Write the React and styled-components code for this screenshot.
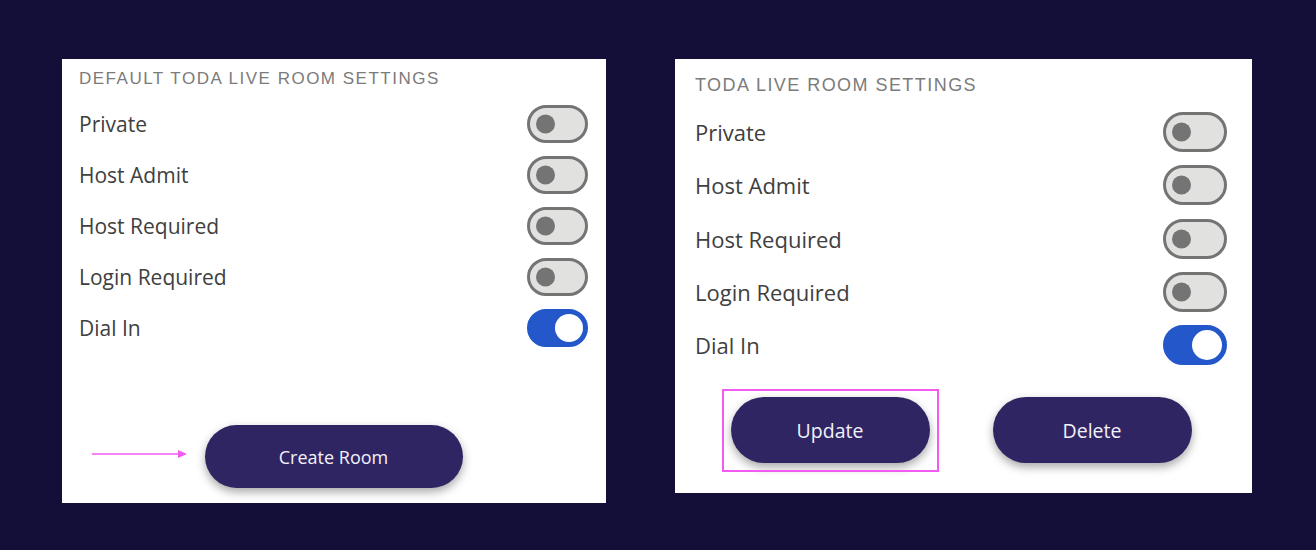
import styled, { createGlobalStyle } from "styled-components";

const GlobalStyle = createGlobalStyle`
  html, body {
    margin: 0;
    height: 100%;
    background: #140f38;
  }
  body {
    font-family: "Open Sans", "Noto Sans", sans-serif;
  }
`;

const Page = styled.div`
  display: flex;
  align-items: flex-start;
  gap: 69px;
  padding: 59px 0 0 62px;
`;

const Panel = styled.section`
  position: relative;
  display: flex;
  flex-direction: column;
  box-sizing: border-box;
  background: #fff;
  width: ${(p) => p.$w}px;
  height: ${(p) => p.$h}px;
  padding: ${(p) => p.$pad};
`;

const Title = styled.h2`
  margin: 0;
  font-family: "Liberation Sans", Arial, sans-serif;
  font-weight: 400;
  font-size: ${(p) => p.$size}px;
  line-height: 20px;
  letter-spacing: ${(p) => p.$ls}px;
  color: #7b7b7b;
  text-transform: uppercase;
`;

const List = styled.ul`
  list-style: none;
  margin: ${(p) => p.$top}px 0 0;
  padding: 0;
  display: flex;
  flex-direction: column;
  gap: ${(p) => p.$gap}px;
`;

const Row = styled.li`
  display: flex;
  align-items: center;
  justify-content: space-between;
  font-size: ${(p) => p.$size}px;
  color: #404040;
`;

const Track = styled.span`
  position: relative;
  display: inline-block;
  box-sizing: border-box;
  width: ${(p) => p.$w}px;
  height: ${(p) => p.$h}px;
  border-radius: ${(p) => p.$h / 2}px;
  border: 3px solid ${(p) => (p.$on ? "#2457c9" : "#747474")};
  background: ${(p) => (p.$on ? "#2457c9" : "#e1e2e0")};
`;

const Knob = styled.span`
  position: absolute;
  top: 50%;
  border-radius: 50%;
  transform: translateY(-50%);
  width: ${(p) => (p.$on ? p.$h - 10 : 19)}px;
  height: ${(p) => (p.$on ? p.$h - 10 : 19)}px;
  background: ${(p) => (p.$on ? "#fff" : "#747474")};
  ${(p) => (p.$on ? "right: 2px;" : "left: 6px;")}
`;

const Toggle = ({ on, w, h }) => (
  <Track $on={on} $w={w} $h={h}>
    <Knob $on={on} $h={h} />
  </Track>
);

const Footer = styled.div`
  position: relative;
  margin-top: auto;
  display: flex;
  justify-content: center;
  gap: ${(p) => p.$gap || 0}px;
`;

const Button = styled.button`
  border: none;
  cursor: pointer;
  width: ${(p) => p.$w}px;
  height: ${(p) => p.$h}px;
  border-radius: ${(p) => p.$h / 2}px;
  background: #2f2563;
  color: #f3f1fa;
  font-family: "Open Sans", "Noto Sans", sans-serif;
  font-size: ${(p) => p.$size}px;
  box-shadow: 0 4px 10px rgba(0, 0, 0, 0.35);
`;

const Highlight = styled.span`
  position: relative;
  display: inline-flex;
  &::after {
    content: "";
    position: absolute;
    inset: -8px -9px -9px -9px;
    border: 2px solid #f25af2;
    pointer-events: none;
  }
`;

const Arrow = styled.svg`
  position: absolute;
  left: 13px;
  top: 24px;
`;

const settings = [
  ["Private", false],
  ["Host Admit", false],
  ["Host Required", false],
  ["Login Required", false],
  ["Dial In", true],
];

export default function App() {
  return (
    <>
      <GlobalStyle />
      <Page>
        <Panel $w={544} $h={444} $pad="10px 18px 15px 17px">
          <Title $size={17} $ls={1.5}>Default Toda Live Room Settings</Title>
          <List $top={16} $gap={13}>
            {settings.map(([label, on]) => (
              <Row key={label} $size={21}>
                {label}
                <Toggle on={on} w={61} h={38} />
              </Row>
            ))}
          </List>
          <Footer>
            <Arrow width="96" height="10" viewBox="0 0 96 10">
              <line x1="0" y1="5" x2="88" y2="5" stroke="#f25af2" strokeWidth="1.5" />
              <polygon points="86,1 95,5 86,9" fill="#f25af2" />
            </Arrow>
            <Button $w={258} $h={63} $size={18}>Create Room</Button>
          </Footer>
        </Panel>
        <Panel $w={577} $h={434} $pad="16px 25px 30px 20px">
          <Title $size={18} $ls={1.45}>Toda Live Room Settings</Title>
          <List $top={17} $gap={13.25}>
            {settings.map(([label, on]) => (
              <Row key={label} $size={22}>
                {label}
                <Toggle on={on} w={64} h={40} />
              </Row>
            ))}
          </List>
          <Footer $gap={63}>
            <Highlight>
              <Button $w={199} $h={66} $size={19.5}>Update</Button>
            </Highlight>
            <Button $w={199} $h={66} $size={19.5}>Delete</Button>
          </Footer>
        </Panel>
      </Page>
    </>
  );
}
